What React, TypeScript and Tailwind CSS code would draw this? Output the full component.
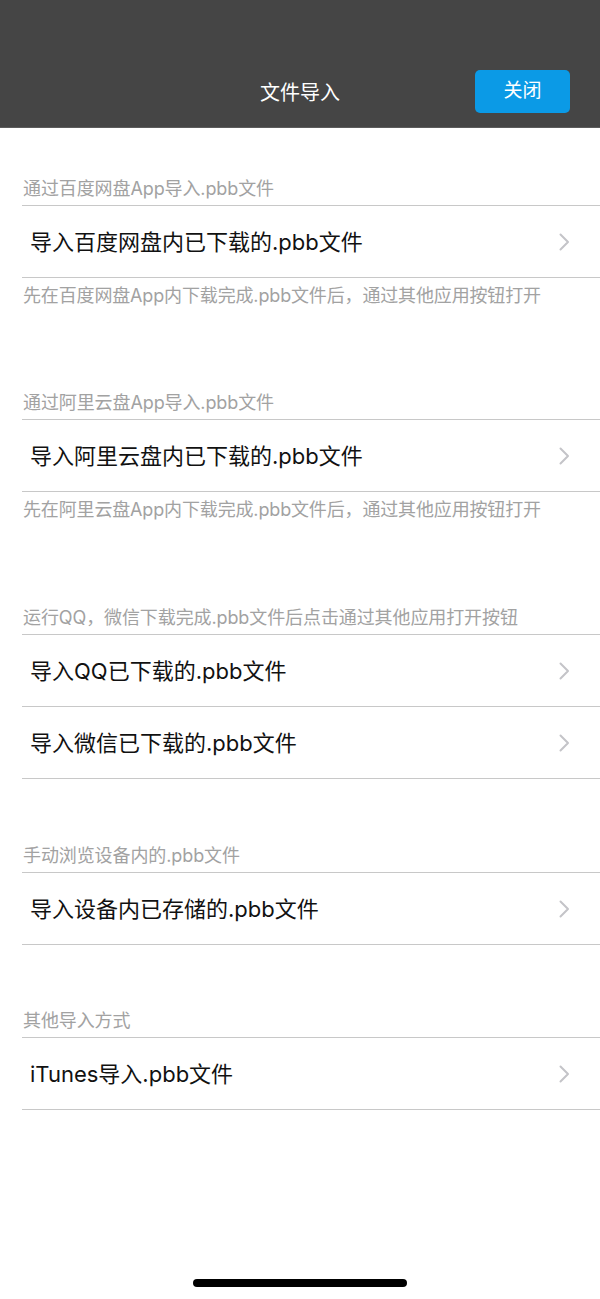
import React from "react";

type Section = {
  title: string;
  rows: string[];
  footer?: string;
  gap: string;
};

const SECTIONS: Section[] = [
  {
    title: "通过百度网盘App导入.pbb文件",
    rows: ["导入百度网盘内已下载的.pbb文件"],
    footer: "先在百度网盘App内下载完成.pbb文件后，通过其他应用按钮打开",
    gap: "mt-[50px]",
  },
  {
    title: "通过阿里云盘App导入.pbb文件",
    rows: ["导入阿里云盘内已下载的.pbb文件"],
    footer: "先在阿里云盘App内下载完成.pbb文件后，通过其他应用按钮打开",
    gap: "mt-[86px]",
  },
  {
    title: "运行QQ，微信下载完成.pbb文件后点击通过其他应用打开按钮",
    rows: ["导入QQ已下载的.pbb文件", "导入微信已下载的.pbb文件"],
    gap: "mt-[87px]",
  },
  {
    title: "手动浏览设备内的.pbb文件",
    rows: ["导入设备内已存储的.pbb文件"],
    gap: "mt-[66px]",
  },
  {
    title: "其他导入方式",
    rows: ["iTunes导入.pbb文件"],
    gap: "mt-[65px]",
  },
];

function Chevron() {
  return (
    <svg width="11" height="18" viewBox="0 0 11 18" fill="none">
      <polyline points="1.5,1.5 9,9 1.5,16.5" stroke="#c4c4c8" strokeWidth="2" strokeLinecap="round" strokeLinejoin="round" />
    </svg>
  );
}

export default function App() {
  return (
    <div className="min-h-[1299px] w-full bg-white flex flex-col font-['Inter','Noto_Sans_CJK_SC',sans-serif]">
      {/* Nav bar */}
      <header className="h-[128px] bg-[#454545] border-b border-[#5c5c5c] relative flex items-end justify-center pb-[14px]">
        <h1 className="text-white text-[20px] leading-[28px] mb-[6px]">文件导入</h1>
        <button className="absolute right-[30px] top-[70px] w-[95px] h-[43px] rounded-[5px] bg-[#0b9ae6] text-white text-[19px] flex items-center justify-center">
          关闭
        </button>
      </header>

      <main>
        {SECTIONS.map((s) => (
          <section key={s.title} className={s.gap}>
            <div className="pl-[23px] pt-[1px] pb-[6px] text-[18px] leading-[20px] tracking-[-0.1px] text-[#a2a2a2]">{s.title}</div>
            <div className="ml-[22px] border-b border-[#c8c8c8]">
              {s.rows.map((r) => (
                <div key={r} className="h-[72px] pt-[1px] border-t border-[#c8c8c8] flex items-center justify-between pl-[8px] pr-[30px]">
                  <span className="text-[22px] text-[#111111]">{r}</span>
                  <Chevron />
                </div>
              ))}
            </div>
            {s.footer && (
              <div className="mt-[8px] pl-[23px] text-[18px] leading-[20px] tracking-[-0.15px] text-[#a2a2a2]">{s.footer}</div>
            )}
          </section>
        ))}
      </main>

      <div className="mt-auto flex justify-center pb-[12px]">
        <div className="w-[214px] h-[8px] rounded-full bg-black" />
      </div>
    </div>
  );
}
